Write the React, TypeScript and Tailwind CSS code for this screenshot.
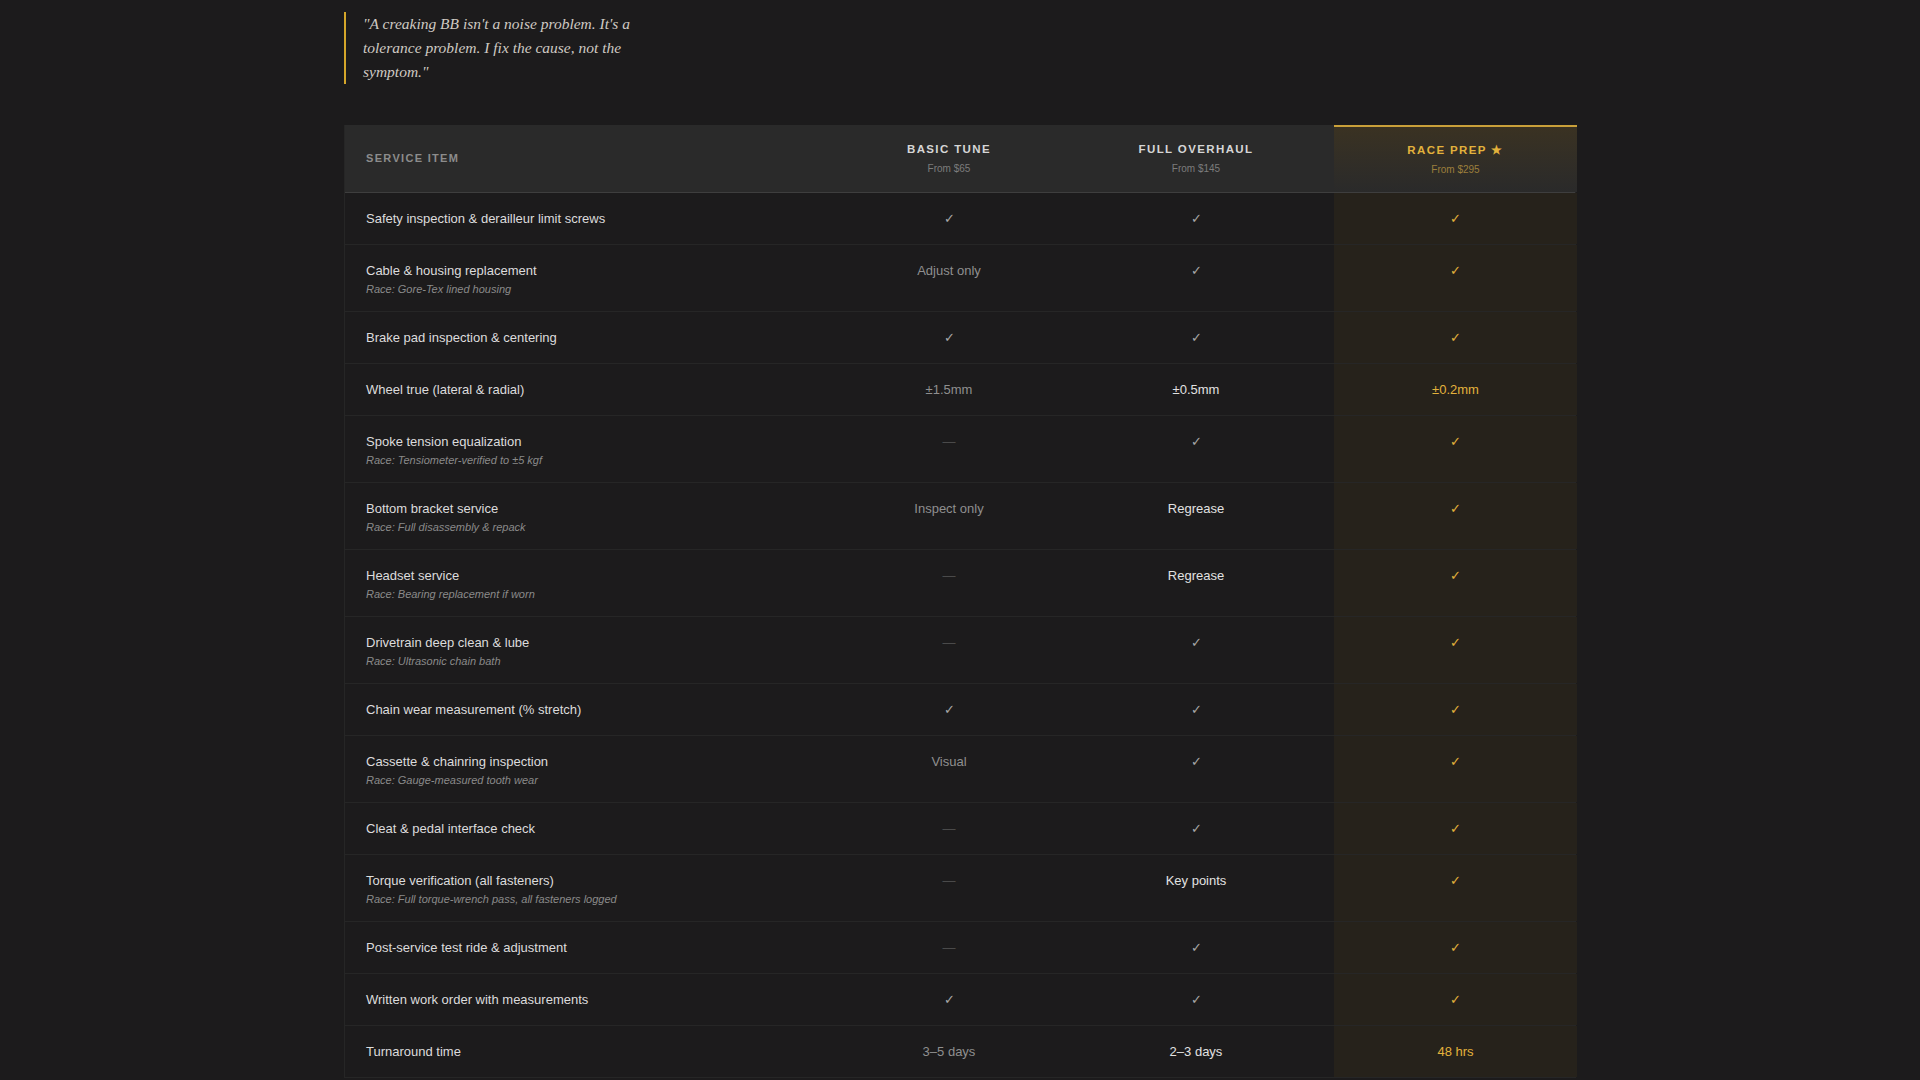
import React from "react";

type Row = { label: string; sub?: string; b: string; f: string; r: string };
const rows: Row[] = [
  { label: "Safety inspection & derailleur limit screws", b: "✓", f: "✓", r: "✓" },
  { label: "Cable & housing replacement", sub: "Race: Gore-Tex lined housing", b: "Adjust only", f: "✓", r: "✓" },
  { label: "Brake pad inspection & centering", b: "✓", f: "✓", r: "✓" },
  { label: "Wheel true (lateral & radial)", b: "±1.5mm", f: "±0.5mm", r: "±0.2mm" },
  { label: "Spoke tension equalization", sub: "Race: Tensiometer-verified to ±5 kgf", b: "—", f: "✓", r: "✓" },
  { label: "Bottom bracket service", sub: "Race: Full disassembly & repack", b: "Inspect only", f: "Regrease", r: "✓" },
  { label: "Headset service", sub: "Race: Bearing replacement if worn", b: "—", f: "Regrease", r: "✓" },
  { label: "Drivetrain deep clean & lube", sub: "Race: Ultrasonic chain bath", b: "—", f: "✓", r: "✓" },
  { label: "Chain wear measurement (% stretch)", b: "✓", f: "✓", r: "✓" },
  { label: "Cassette & chainring inspection", sub: "Race: Gauge-measured tooth wear", b: "Visual", f: "✓", r: "✓" },
  { label: "Cleat & pedal interface check", b: "—", f: "✓", r: "✓" },
  { label: "Torque verification (all fasteners)", sub: "Race: Full torque-wrench pass, all fasteners logged", b: "—", f: "Key points", r: "✓" },
  { label: "Post-service test ride & adjustment", b: "—", f: "✓", r: "✓" },
  { label: "Written work order with measurements", b: "✓", f: "✓", r: "✓" },
  { label: "Turnaround time", b: "3–5 days", f: "2–3 days", r: "48 hrs" },
];

function Val({ v, tone }: { v: string; tone: "b" | "f" | "r" }) {
  if (v === "—") return <span className="text-[#4a4a4a]">—</span>;
  if (tone === "r") return <span className="text-[#e3b23c]">{v}</span>;
  if (v === "✓") return <span className="text-[#a8a8a8]">✓</span>;
  return <span className={tone === "b" ? "text-[#8f8f8f]" : "text-[#e2e2e2]"}>{v}</span>;
}

const cols = "grid grid-cols-[495px_218px_276px_243px]";

export default function App() {
  return (
    <div className="min-h-screen bg-[#1c1b1c] font-[family-name:Liberation_Sans,Arial,sans-serif]">
      <div className="mx-auto w-[1232px] pt-[12px]">
        <blockquote className="border-l-2 border-[#d4a62a] pl-[17px] w-[300px] font-[family-name:Liberation_Serif,serif] italic text-[15.5px] leading-[24px] text-[#cfcac3]">
          "A creaking BB isn't a noise problem. It's a tolerance problem. I fix the cause, not the symptom."
        </blockquote>
        <div className="mt-[41px] border-l border-r border-[#262626]">
          <div className={`${cols} bg-[#2a2a2a] border-b border-[#3e3e3e] h-[68px]`}>
            <div className="flex items-center pl-[21px] text-[11px] font-bold tracking-[0.12em] text-[#8c8c8c]">SERVICE ITEM</div>
            <div className="flex flex-col items-center justify-center gap-[3px]">
              <div className="text-[11.5px] font-bold tracking-[0.12em] text-[#d6d6d6]">BASIC TUNE</div>
              <div className="text-[10px] text-[#7c7c7c]">From $65</div>
            </div>
            <div className="flex flex-col items-center justify-center gap-[3px]">
              <div className="text-[11.5px] font-bold tracking-[0.12em] text-[#d6d6d6]">FULL OVERHAUL</div>
              <div className="text-[10px] text-[#7c7c7c]">From $145</div>
            </div>
            <div className="flex flex-col items-center justify-center gap-[3px] border-t-2 border-[#c9a03a] bg-gradient-to-b from-[#3a3222] to-[#2a2a2a]">
              <div className="text-[11.5px] font-bold tracking-[0.12em] text-[#e3b23c]">RACE PREP ★</div>
              <div className="text-[10px] text-[#9c7f3c]">From $295</div>
            </div>
          </div>
          {rows.map((row, i) => (
            <div key={i} className={`${cols} border-b border-[#262626] text-[13px]`}>
              <div className="pl-[21px] pt-[16px] pb-[15px]">
                <div className="leading-[20px] text-[#dcdcdc]">{row.label}</div>
                {row.sub && <div className="mt-[1px] text-[11px] leading-[14px] italic text-[#8a8a8a]">{row.sub}</div>}
              </div>
              <div className="text-center pt-[16px] leading-[20px]"><Val v={row.b} tone="b" /></div>
              <div className="text-center pt-[16px] leading-[20px]"><Val v={row.f} tone="f" /></div>
              <div className="text-center pt-[16px] leading-[20px] bg-[#26221b]"><Val v={row.r} tone="r" /></div>
            </div>
          ))}
        </div>
      </div>
    </div>
  );
}
